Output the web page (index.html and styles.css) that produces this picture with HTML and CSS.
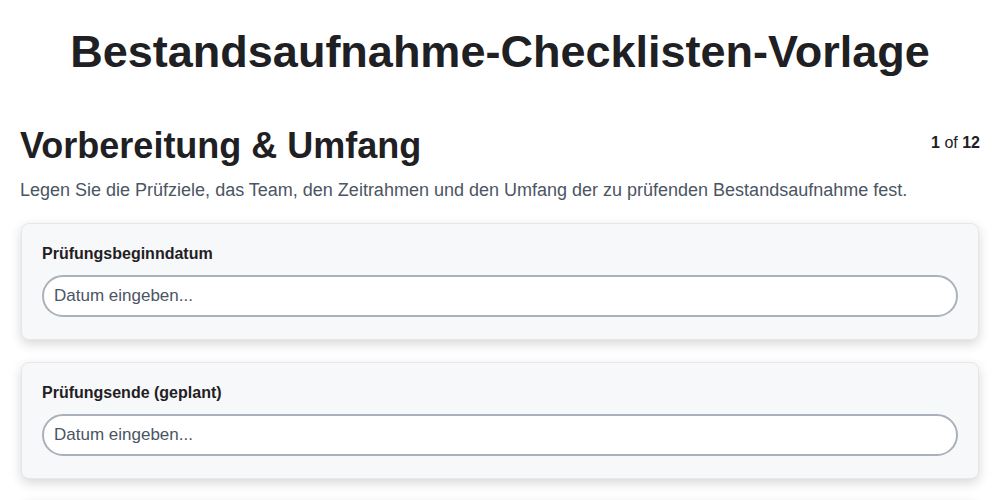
FILE: index.html
```html
<!DOCTYPE html>
<html lang="de">
<head>
    <meta charset="UTF-8">
    <meta name="viewport" content="width=device-width, initial-scale=1.0">
    <title>Bestandsaufnahme-Checklisten-Vorlage</title>
    <link rel="stylesheet" href="styles.css">
</head>
<body>
    <h1 class="page-title">Bestandsaufnahme-Checklisten-Vorlage</h1>

    <div class="section">
        <div class="section-head">
            <h2 class="section-title">Vorbereitung &amp; Umfang</h2>
            <span class="pager"><b>1</b> of <b>12</b></span>
        </div>
        <p class="section-desc">Legen Sie die Prüfziele, das Team, den Zeitrahmen und den Umfang der zu prüfenden Bestandsaufnahme fest.</p>

        <div class="card">
            <label class="field-label" for="start">Prüfungsbeginndatum</label>
            <input class="field-input" id="start" type="text" placeholder="Datum eingeben...">
        </div>

        <div class="card">
            <label class="field-label" for="end">Prüfungsende (geplant)</label>
            <input class="field-input" id="end" type="text" placeholder="Datum eingeben...">
        </div>

        <div class="card">
            <label class="field-label" for="team">Prüfteam</label>
            <input class="field-input" id="team" type="text" placeholder="Namen eingeben...">
        </div>
    </div>
</body>
</html>
```

FILE: styles.css
```css
body {
    margin: 0;
    padding: 0 20px;
    background-color: #ffffff;
    font-family: "Liberation Sans", Arial, sans-serif;
    color: #1f2023;
}

.page-title {
    margin: 0;
    padding-top: 26px;
    text-align: center;
    font-size: 45px;
    line-height: 52px;
    font-weight: bold;
    color: #1f2023;
}

.section {
    margin-top: 46px;
}

.section-head {
    display: flex;
    justify-content: space-between;
    align-items: flex-start;
}

.section-title {
    margin: 0;
    font-size: 36px;
    line-height: 44px;
    font-weight: bold;
}

.pager {
    margin-top: 10px;
    font-size: 16px;
    color: #1f2023;
}

.section-desc {
    margin: 10px 0 21px;
    font-size: 18px;
    line-height: 24px;
    color: #4b5563;
}

.card {
    display: flex;
    flex-direction: column;
    margin: 0 1px 22px;
    padding: 20px 20px 22px;
    background-color: #f7f8fa;
    border: 1px solid #e5e7eb;
    border-radius: 8px;
    box-shadow: 0 4px 12px rgba(0, 0, 0, 0.16);
}

.field-label {
    margin-bottom: 11px;
    font-size: 16px;
    line-height: 20px;
    font-weight: bold;
    color: #1f2023;
}

.field-input {
    height: 42px;
    box-sizing: border-box;
    padding: 0 10px;
    border: 2px solid #aab1ba;
    border-radius: 21px;
    background-color: #ffffff;
    font-family: "Liberation Sans", Arial, sans-serif;
    font-size: 17px;
    color: #1f2023;
    outline: none;
}

.field-input::placeholder {
    color: #4b5563;
}
```
